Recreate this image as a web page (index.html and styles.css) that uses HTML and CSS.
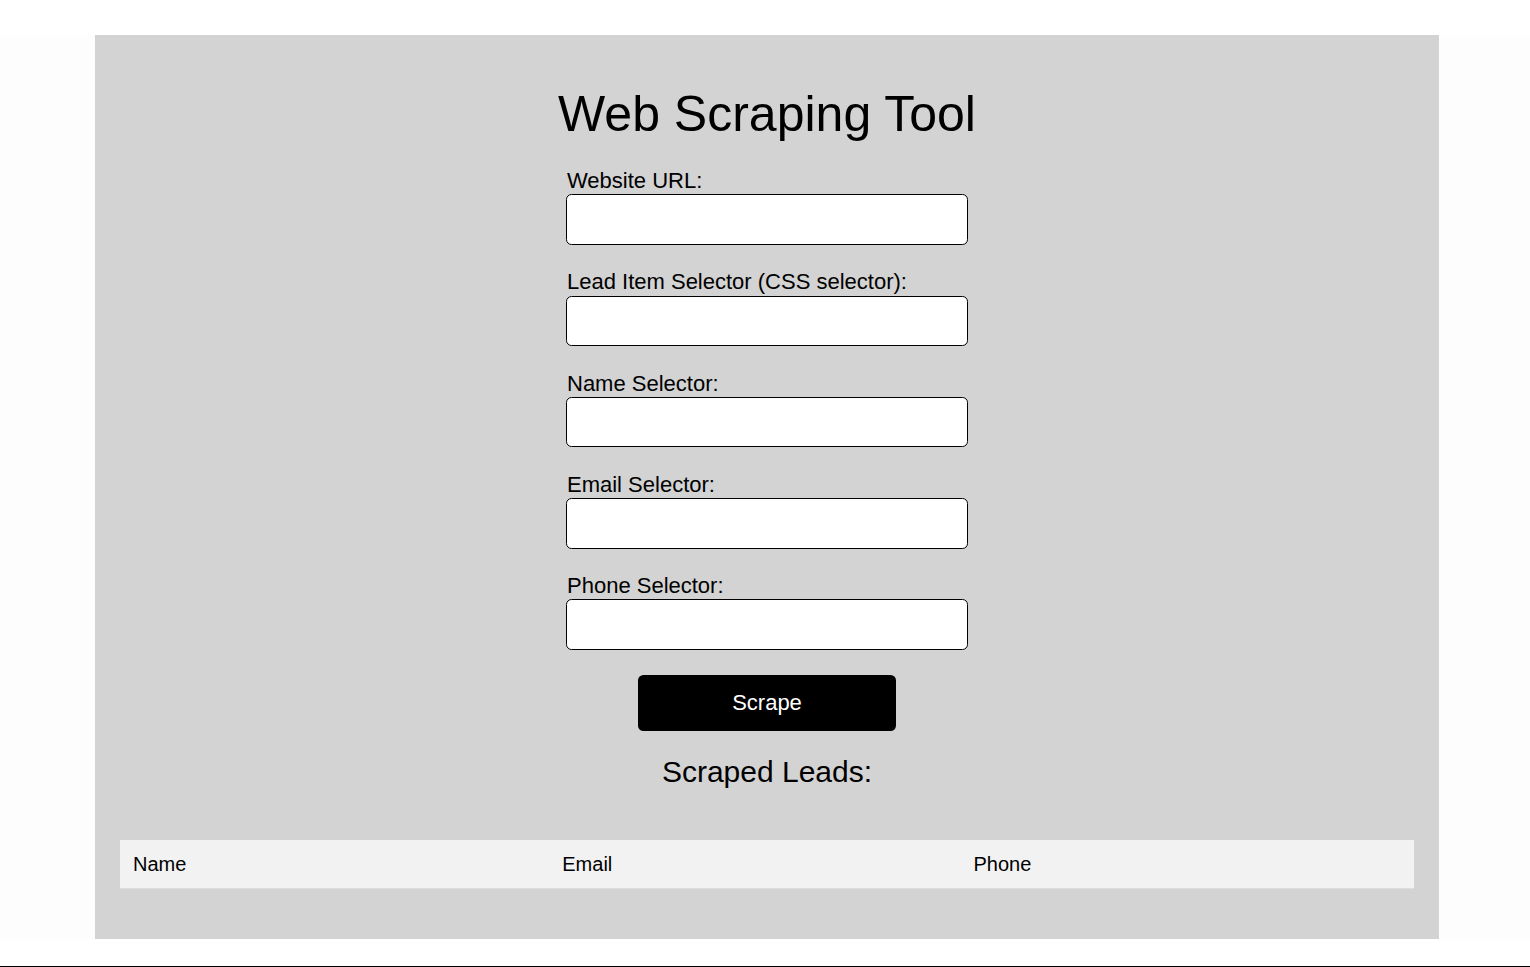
FILE: index.html
```html
<!DOCTYPE html>
<html lang="en">
<head>
<meta charset="utf-8">
<title>Web Scraping Tool</title>
<link rel="stylesheet" href="styles.css">
</head>
<body>
<div class="top-gap"></div>
<div class="band">
  <main class="panel">
    <h1 class="title">Web Scraping Tool</h1>
    <form class="form">
      <div class="field">
        <label class="label" for="url">Website URL:</label>
        <input class="input" id="url" type="text">
      </div>
      <div class="field">
        <label class="label" for="item">Lead Item Selector (CSS selector):</label>
        <input class="input" id="item" type="text">
      </div>
      <div class="field">
        <label class="label" for="name">Name Selector:</label>
        <input class="input" id="name" type="text">
      </div>
      <div class="field">
        <label class="label" for="email">Email Selector:</label>
        <input class="input" id="email" type="text">
      </div>
      <div class="field">
        <label class="label" for="phone">Phone Selector:</label>
        <input class="input" id="phone" type="text">
      </div>
      <button class="btn" type="button">Scrape</button>
    </form>
    <h2 class="subtitle">Scraped Leads:</h2>
    <table class="leads">
      <thead>
        <tr>
          <th>Name</th>
          <th>Email</th>
          <th>Phone</th>
        </tr>
      </thead>
      <tbody></tbody>
    </table>
  </main>
</div>
<div class="bottom-gap"></div>
<div class="bottom-line"></div>
</body>
</html>
```
FILE: styles.css
```css
html, body {
  margin: 0;
  padding: 0;
  background: #ffffff;
  font-family: "Liberation Sans", Arial, sans-serif;
  color: #000;
}

.top-gap {
  height: 35px;
}

.band {
  background: #fdfdfd;
  padding: 0 91px 0 95px;
}

.panel {
  background: #d3d3d3;
  height: 904px;
  box-sizing: border-box;
  padding: 51px 25px 0 25px;
  display: flex;
  flex-direction: column;
  align-items: center;
}

.title {
  margin: 0 0 26px 0;
  font-size: 50px;
  font-weight: normal;
  line-height: 57px;
}

.form {
  width: 402px;
  display: flex;
  flex-direction: column;
}

.field {
  display: flex;
  flex-direction: column;
  margin-bottom: 25.5px;
}

.label {
  font-size: 22px;
  line-height: 24px;
  padding-bottom: 1.3px;
  padding-left: 1px;
}

.input {
  box-sizing: border-box;
  height: 50.5px;
  width: 402px;
  margin: 0;
  border: 1px solid #000;
  border-radius: 5.5px;
  background: #fff;
  font-family: inherit;
  font-size: 22px;
  padding: 0 10px;
}

.btn {
  align-self: center;
  width: 258px;
  height: 56px;
  margin: 0;
  border: none;
  border-radius: 5.5px;
  background: #000;
  color: #fff;
  font-family: inherit;
  font-size: 22px;
  cursor: pointer;
}

.subtitle {
  margin: 23px 0 0 0;
  font-size: 30px;
  font-weight: normal;
  line-height: 35px;
}

.leads {
  margin-top: 51px;
  width: 100%;
  border-collapse: collapse;
  font-size: 20px;
}

.leads th {
  background: #f2f2f2;
  font-weight: normal;
  text-align: left;
  padding: 12px 13px;
  line-height: 24px;
  border-bottom: 1px solid #dddddd;
}

.bottom-gap {
  height: 27px;
}

.bottom-line {
  height: 1px;
  background: #000;
}
```
